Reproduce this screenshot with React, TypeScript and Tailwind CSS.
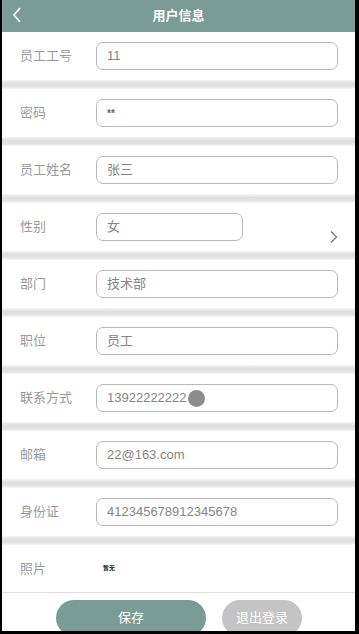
import React from "react";

const font = { fontFamily: '"Liberation Sans", "Noto Sans CJK SC", sans-serif' };

function Sep() {
  return <div className="h-[9px] shrink-0 bg-[linear-gradient(to_bottom,#f4f4f4,#dedede_40%,#e2e2e2_70%,#f6f6f6)]" />;
}

function Row({ label, value, children }: { label: string; value: string; children?: React.ReactNode }) {
  return (
    <div className="relative flex h-[48px] shrink-0 items-center bg-white">
      <div className="w-[94px] pl-[18px] text-[13px] text-[#9a9a9a]">{label}</div>
      <div className="flex h-[28px] w-[242px] items-center rounded-[7px] border border-[#b9b9b9] pl-[10px] text-[13px] text-[#858585]">
        {value}
        {children}
      </div>
    </div>
  );
}

export default function App() {
  return (
    <div className="h-[634px] w-[359px] overflow-hidden bg-black pb-[3px] pl-[2px] pr-[4px]" style={font}>
      <div className="flex h-full flex-col overflow-hidden bg-white">
        <div className="relative flex h-[32px] shrink-0 items-center justify-center bg-[#7a9b96]">
          <svg className="absolute left-[9px] top-[6px]" width="12" height="18" viewBox="0 0 12 18">
            <path d="M9 2 L3 9 L9 16" fill="none" stroke="white" strokeWidth="1.8" />
          </svg>
          <span className="text-[13px] font-bold text-white">用户信息</span>
        </div>
        <Row label="员工工号" value="11" />
        <Sep />
        <div className="relative flex h-[48px] shrink-0 items-center bg-white">
          <div className="w-[94px] pl-[18px] text-[13px] text-[#9a9a9a]">密码</div>
          <div className="flex h-[28px] w-[242px] items-center rounded-[7px] border border-[#b9b9b9] pl-[10px] text-[10px] font-bold text-[#666]">
            **
          </div>
        </div>
        <Sep />
        <Row label="员工姓名" value="张三" />
        <Sep />
        <div className="relative flex h-[48px] shrink-0 items-center bg-white">
          <div className="w-[94px] pl-[18px] text-[13px] text-[#9a9a9a]">性别</div>
          <div className="flex h-[28px] w-[147px] items-center rounded-[7px] border border-[#b9b9b9] pl-[10px] text-[13px] text-[#858585]">
            女
          </div>
          <svg className="absolute left-[327px] top-[27px]" width="10" height="14" viewBox="0 0 10 14">
            <path d="M2 1.5 L7.5 7 L2 12.5" fill="none" stroke="#777" strokeWidth="1.3" />
          </svg>
        </div>
        <Sep />
        <Row label="部门" value="技术部" />
        <Sep />
        <Row label="职位" value="员工" />
        <Sep />
        <Row label="联系方式" value="13922222222">
          <span className="ml-[1px] inline-block h-[17px] w-[17px] rounded-full bg-[#8c8c8c]" />
        </Row>
        <Sep />
        <Row label="邮箱" value="22@163.com" />
        <Sep />
        <Row label="身份证" value="412345678912345678" />
        <Sep />
        <div className="flex h-[48px] shrink-0 items-center border-b border-[#e2dede] bg-white">
          <div className="w-[94px] pl-[18px] text-[13px] text-[#9a9a9a]">照片</div>
          <span className="ml-[7px] text-[6px] font-bold text-[#222]">暂无</span>
        </div>
        <div className="flex shrink-0 gap-[16px] pl-[54px] pt-[7px]">
          <div className="flex h-[36px] w-[150px] items-center justify-center rounded-full bg-[#7a9b96] text-[13px] text-white">
            保存
          </div>
          <div className="flex h-[36px] w-[80px] items-center justify-center rounded-full bg-[#c4c4c4] text-[13px] text-white">
            退出登录
          </div>
        </div>
      </div>
    </div>
  );
}
